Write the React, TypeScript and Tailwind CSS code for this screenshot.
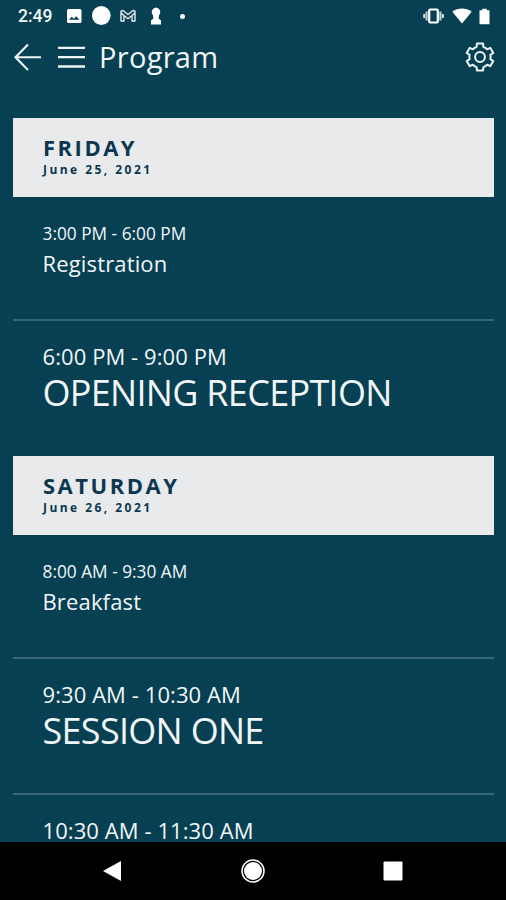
import React from "react";

function StatusBar() {
  return (
    <div className="flex h-8 shrink-0 items-center pl-[18px] pr-[16px]">
      <span className="w-[47px] font-['Roboto'] text-[17.5px] font-medium leading-8">2:49</span>
      <svg className="mr-[9px] block" width="18" height="18" viewBox="0 0 18 18">
        <rect x="2" y="2" width="14.5" height="14" rx="1.5" fill="#fff" />
        <path d="M4 12.8 L6.8 9.8 L8.8 11.8 L11.2 9.2 L14.5 12.8 Z" fill="#064052" />
      </svg>
      <svg className="mr-[9px] block" width="19" height="20" viewBox="0 0 19 20">
        <ellipse cx="9.3" cy="9.5" rx="9.3" ry="9.5" fill="#fff" />
      </svg>
      <svg className="mr-[14px] block" width="16" height="14" viewBox="0 0 16 14">
        <path
          d="M1 12V2.2L3 1.5L8 5.5L13 1.5L15 2.2V12H12V6.5L8 9.7L4 6.5V12Z M4 6.5L1 3.8 M12 6.5L15 3.8"
          fill="none"
          stroke="#e6edef"
          strokeWidth="1.4"
          strokeLinejoin="round"
        />
      </svg>
      <svg className="block" width="12" height="18" viewBox="0 0 12 18">
        <path
          d="M6 0.5A4.8 4.8 0 0 1 9 8.6L8.6 11.5L11 13.5V17.5H1V13.5L3.4 11.5L3 8.6A4.8 4.8 0 0 1 6 0.5Z"
          fill="#fff"
        />
      </svg>
      <span className="ml-[18px] size-[5px] rounded-full bg-white" />
      <div className="ml-auto flex items-center">
        <svg className="mr-[8px] block" width="21" height="16" viewBox="0 0 21 16">
          <rect x="6.2" y="1.5" width="8.6" height="13" rx="1" fill="none" stroke="#fff" strokeWidth="2.2" />
          <path d="M3.6 3.5V12.5M17.4 3.5V12.5" stroke="#b9cad0" strokeWidth="2.2" />
          <path d="M1.2 6V10M19.8 6V10" stroke="#d5e0e3" strokeWidth="2" />
        </svg>
        <svg className="mr-[7px] block" width="20" height="16" viewBox="0 0 20 16">
          <path d="M0.3 3.8C6 -0.6 14 -0.6 19.7 3.8L10 15.5Z" fill="#fff" />
        </svg>
        <svg className="block" width="11" height="17" viewBox="0 0 11 17">
          <path d="M3.3 0.7H7.7V2.3H10.5V16.3H0.5V2.3H3.3Z" fill="#fff" />
        </svg>
      </div>
    </div>
  );
}

function Header() {
  return (
    <header className="flex h-[86px] shrink-0 items-start pl-[14px] pr-[11px] pt-[10px]">
      <svg className="mr-[16px] mt-[1px] block" width="28" height="28" viewBox="0 0 28 28">
        <path d="M27 14.2H1.5M14 1.5L1.5 14.2L14 27" fill="none" stroke="#eef3f5" strokeWidth="2.1" />
      </svg>
      <svg className="mr-[14px] mt-[1px] block" width="27" height="28" viewBox="0 0 27 28">
        <path d="M0 4.8H27M0 14.2H27M0 23.5H27" stroke="#eef3f5" strokeWidth="2.3" />
      </svg>
      <h1 className="text-[29px] leading-[30px] tracking-[0.3px]">Program</h1>
      <svg className="ml-auto block" width="30" height="30" viewBox="-15 -15 30 30">
        <path
          d="M-3.1 -13.4H3.1L3.4 -10.1A10.6 10.6 0 0 1 7.2 -7.7L10.2 -9.2L13.3 -4.1L10.4 -2.2A10.6 10.6 0 0 1 10.4 2.2L13.3 4.1L10.2 9.2L7.2 7.7A10.6 10.6 0 0 1 3.4 10.1L3.1 13.4H-3.1L-3.4 10.1A10.6 10.6 0 0 1 -7.2 7.7L-10.2 9.2L-13.3 4.1L-10.4 2.2A10.6 10.6 0 0 1 -10.4 -2.2L-13.3 -4.1L-10.2 -9.2L-7.2 -7.7A10.6 10.6 0 0 1 -3.4 -10.1Z"
          fill="none"
          stroke="#eef3f5"
          strokeWidth="2"
          strokeLinejoin="round"
        />
        <circle cx="0" cy="0" r="4.9" fill="none" stroke="#eef3f5" strokeWidth="2" />
      </svg>
    </header>
  );
}

function DayBanner({ day, date }: { day: string; date: string }) {
  return (
    <div className="h-[79px] shrink-0 bg-[#e8eaeb] pl-[30px] pt-[15px] text-[#0b3850]">
      <h2 className="text-[22px] font-bold leading-7 tracking-[2.5px]">{day}</h2>
      <p className="text-[12px] font-bold leading-[17px] tracking-[2.45px]">{date}</p>
    </div>
  );
}

function Item({ time, title }: { time: string; title: string }) {
  return (
    <div className="h-[124px] shrink-0 border-b-2 border-[#386878] pl-[29.5px] pt-6">
      <p className="text-[17.3px] leading-[26px]">{time}</p>
      <h3 className="text-[22px] leading-[33px] tracking-[0.15px]">{title}</h3>
    </div>
  );
}

function Feature({ time, title, last = false }: { time: string; title?: string; last?: boolean }) {
  return (
    <div className={last ? "h-[135px] shrink-0 pl-[29.5px] pt-5" : "h-[136px] shrink-0 border-b-2 border-[#386878] pl-[29.5px] pt-5"}>
      <p className="text-[22px] leading-[30px] tracking-[0.08px]">{time}</p>
      {title && <h3 className="text-[36px] leading-[44px] tracking-[-0.7px]">{title}</h3>}
    </div>
  );
}

export default function App() {
  return (
    <div className="flex h-[900px] w-[506px] flex-col overflow-hidden bg-[#064052] font-['Open_Sans',sans-serif] text-[#f3f6f7]">
      <StatusBar />
      <Header />
      <main className="flex min-h-0 flex-1 flex-col overflow-hidden pl-[13px] pr-3">
        <DayBanner day="FRIDAY" date="June 25, 2021" />
        <Item time="3:00 PM - 6:00 PM" title="Registration" />
        <Feature time="6:00 PM - 9:00 PM" title="OPENING RECEPTION" last />
        <DayBanner day="SATURDAY" date="June 26, 2021" />
        <Item time="8:00 AM - 9:30 AM" title="Breakfast" />
        <Feature time="9:30 AM - 10:30 AM" title="SESSION ONE" />
        <Feature time="10:30 AM - 11:30 AM" last />
      </main>
      <nav className="flex h-[58px] shrink-0 items-center justify-between bg-black pl-[102px] pr-[103px]">
        <svg className="block" width="20" height="22" viewBox="0 0 20 22">
          <path d="M1 11L19 1V21Z" fill="#fff" />
        </svg>
        <svg className="block" width="24" height="24" viewBox="0 0 24 24">
          <circle cx="12" cy="12" r="11" fill="none" stroke="#fff" strokeWidth="1.5" />
          <circle cx="12" cy="12" r="9" fill="#fff" />
        </svg>
        <svg className="block" width="20" height="20" viewBox="0 0 20 20">
          <rect x="0.5" y="0.5" width="19" height="19" rx="1" fill="#fff" />
        </svg>
      </nav>
    </div>
  );
}
